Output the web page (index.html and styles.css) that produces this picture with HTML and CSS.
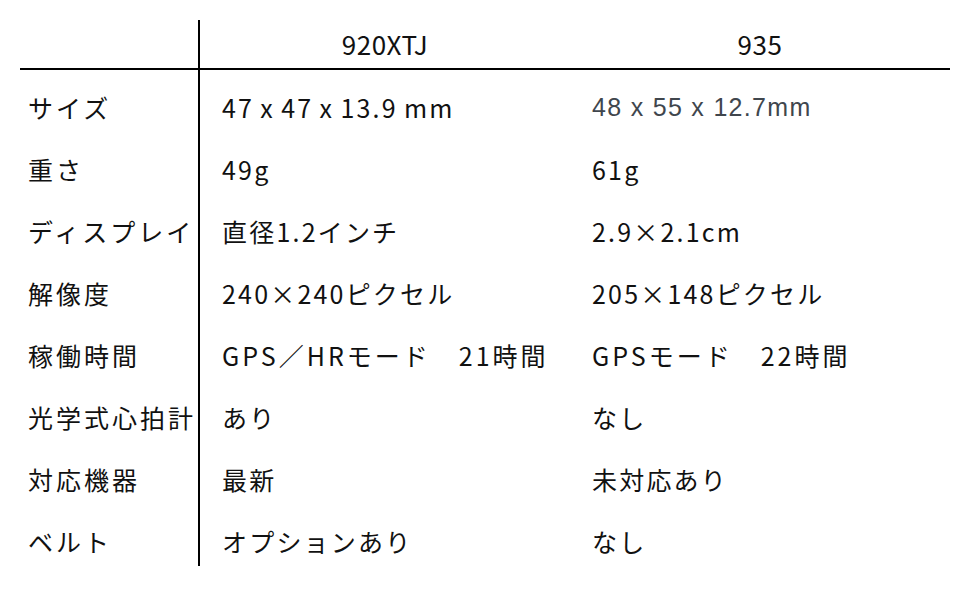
FILE: index.html
```html
<!DOCTYPE html>
<html lang="ja">
<head>
<meta charset="utf-8">
<link rel="stylesheet" href="styles.css">
</head>
<body>
<div class="spec">
  <div class="cell label head"></div>
  <div class="cell head">920XTJ</div>
  <div class="cell head">935</div>

  <div class="cell label">サイズ</div>
  <div class="cell">47 x 47 x 13.9 mm</div>
  <div class="cell alt">48 x 55 x 12.7mm</div>

  <div class="cell label">重さ</div>
  <div class="cell">49g</div>
  <div class="cell">61g</div>

  <div class="cell label">ディスプレイ</div>
  <div class="cell">直径1.2インチ</div>
  <div class="cell">2.9×2.1cm</div>

  <div class="cell label">解像度</div>
  <div class="cell">240×240ピクセル</div>
  <div class="cell">205×148ピクセル</div>

  <div class="cell label">稼働時間</div>
  <div class="cell wide">GPS／HRモード　21時間</div>
  <div class="cell wide">GPSモード　22時間</div>

  <div class="cell label">光学式心拍計</div>
  <div class="cell">あり</div>
  <div class="cell">なし</div>

  <div class="cell label">対応機器</div>
  <div class="cell">最新</div>
  <div class="cell">未対応あり</div>

  <div class="cell label">ベルト</div>
  <div class="cell">オプションあり</div>
  <div class="cell">なし</div>
</div>
</body>
</html>
```
FILE: styles.css
```css
html, body {
  margin: 0;
  padding: 0;
  background: #ffffff;
}
body {
  padding: 20px 0 0 20px;
  font-family: "Noto Sans CJK JP", "Noto Sans", sans-serif;
  color: #111111;
}
.spec {
  display: grid;
  grid-template-columns: 180px 370px 380px;
  grid-template-rows: 50px;
  grid-auto-rows: 62px;
  width: 930px;
}
.cell {
  display: flex;
  align-items: center;
  padding: 12px 0 0 22px;
  font-size: 25px;
  letter-spacing: 2.2px;
  word-spacing: -1.6px;
  white-space: nowrap;
  box-sizing: border-box;
}
.cell.wide {
  letter-spacing: 3px;
}
.cell.label {
  padding-left: 8px;
  border-right: 2px solid #000;
  letter-spacing: 3px;
}
.cell.head {
  height: 50px;
  padding: 0 0 2px 0;
  justify-content: center;
  border-bottom: 2px solid #000;
  font-size: 26px;
  letter-spacing: 0.5px;
}
.cell.label.head {
  padding: 0;
}
.cell.alt {
  font-family: "Liberation Sans", Arial, sans-serif;
  color: #40464d;
  font-size: 25px;
  letter-spacing: 1.3px;
  word-spacing: 0;
}
```
